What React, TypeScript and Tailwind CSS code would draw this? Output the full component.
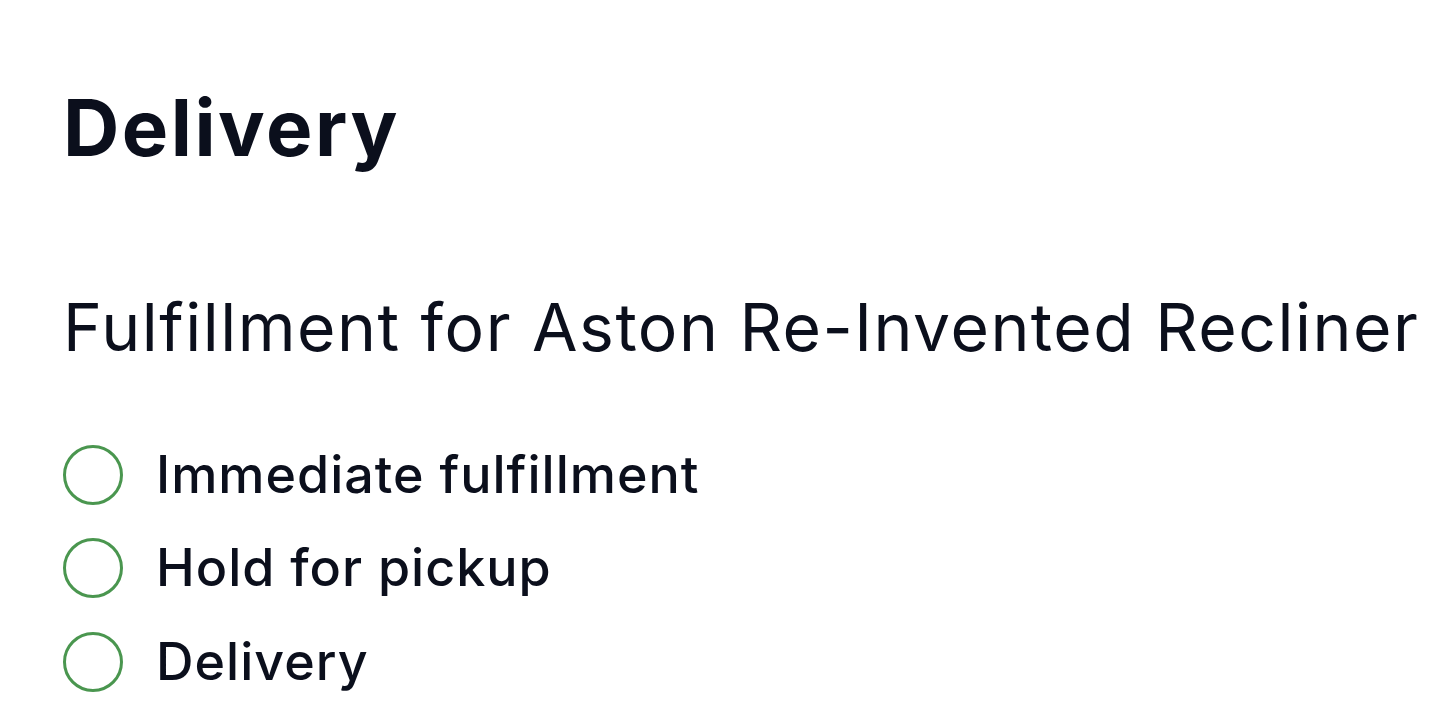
import React, { useState } from 'react';

const options = ['Immediate fulfillment', 'Hold for pickup', 'Delivery'];

const App: React.FC = () => {
    const [selected, setSelected] = useState<string | null>(null);

    return (
        <div className="min-h-screen bg-white px-[63px] pt-[89px] text-[#0b0f1c]" style={{ fontFamily: 'Inter, sans-serif' }}>
            <h1 className="text-[78px] leading-[78px] font-bold tracking-[2.5px]">Delivery</h1>

            <h2 className="mt-[127px] whitespace-nowrap text-[66px] leading-[66px] font-normal tracking-[1.5px]">
                Fulfillment for Aston Re-Invented Recliner
            </h2>

            <div className="mt-[68px] flex flex-col">
                {options.map(opt => (
                    <label key={opt} className="flex h-[93.5px] items-center gap-[33px] cursor-pointer">
                        <span
                            onClick={() => setSelected(opt)}
                            className="flex h-[60px] w-[60px] shrink-0 items-center justify-center rounded-full border-[3px] border-[#4a964f]"
                        >
                            {selected === opt && <span className="h-[30px] w-[30px] rounded-full bg-[#4a964f]" />}
                        </span>
                        <span className="text-[52px] leading-none font-medium tracking-[1px]">{opt}</span>
                    </label>
                ))}
            </div>
        </div>
    );
};

export default App;
